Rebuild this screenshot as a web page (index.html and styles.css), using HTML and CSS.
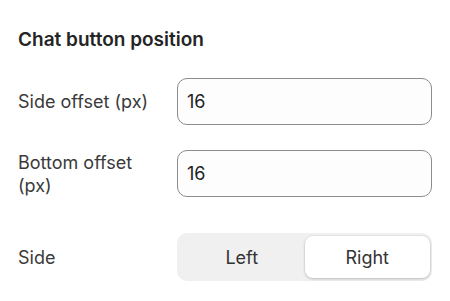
FILE: index.html
```html
<!DOCTYPE html>
<html>
<head>
<meta charset="utf-8">
<link rel="stylesheet" href="styles.css">
</head>
<body>
<div class="panel">
  <h2 class="title">Chat button position</h2>
  <div class="row row-first">
    <label class="label">Side offset (px)</label>
    <input class="input" type="text" value="16">
  </div>
  <div class="row row-second">
    <label class="label">Bottom offset (px)</label>
    <input class="input" type="text" value="16">
  </div>
  <div class="row row-side">
    <span class="label">Side</span>
    <div class="segmented">
      <button class="seg">Left</button>
      <button class="seg seg-active">Right</button>
    </div>
  </div>
</div>
</body>
</html>
```

FILE: styles.css
```css
* { box-sizing: border-box; }
html, body { margin: 0; padding: 0; background: #ffffff; }
body {
  font-family: Inter, "Noto Sans", sans-serif;
  color: #333333;
}
.panel {
  padding: 28px 18px 0 18px;
}
.title {
  margin: 0;
  font-size: 19px;
  font-weight: 600;
  line-height: 24px;
  color: #242424;
}
.row {
  display: grid;
  grid-template-columns: 145px 1fr;
  column-gap: 14px;
  align-items: center;
}
.row-first { margin-top: 26px; }
.row-second { margin-top: 25px; }
.row-side { margin-top: 36px; }
.label {
  font-size: 18px;
  line-height: 23px;
  color: #3a3a3a;
}
.input {
  height: 47px;
  width: 100%;
  border: 1px solid #8c8c8c;
  border-radius: 10px;
  background: #fdfdfd;
  padding: 0 9px;
  font-family: inherit;
  font-size: 18px;
  color: #222222;
  outline: none;
}
.segmented {
  display: grid;
  grid-template-columns: 1fr 1fr;
  height: 48px;
  padding: 3px 2px 3px 2px;
  background: #f0f0f0;
  border-radius: 10px;
}
.seg {
  border: none;
  background: transparent;
  font-family: inherit;
  font-size: 18px;
  color: #333333;
  border-radius: 8px;
  padding: 0;
}
.seg-active {
  background: #ffffff;
  box-shadow: 0 1px 3px rgba(0,0,0,0.2), 0 0 0 0.5px rgba(0,0,0,0.06);
}
```
